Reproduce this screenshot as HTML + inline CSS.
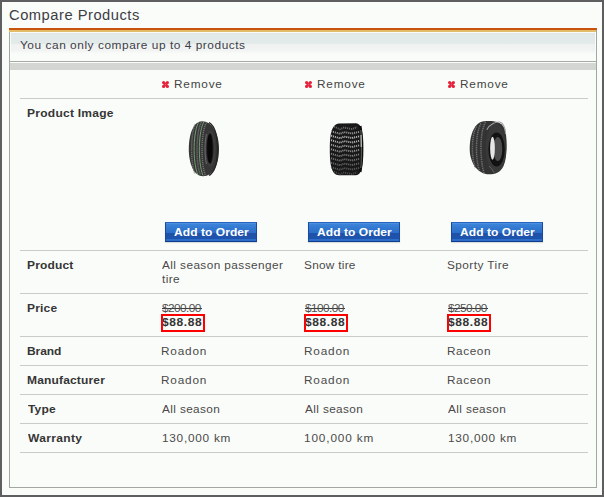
<!DOCTYPE html>
<html><head><meta charset="utf-8">
<style>
html,body{margin:0;padding:0}
body{width:604px;height:497px;overflow:hidden;background:#fafcf9;position:relative;font-family:"Liberation Sans",sans-serif;color:#404040}
.a{position:absolute;white-space:nowrap;transform-origin:0 0}
#frame{position:absolute;left:0;top:0;width:604px;height:497px;box-sizing:border-box;border:2px solid #5e5d60}
.ti{font-size:14px;line-height:18px;color:#3d3d45}
#box{position:absolute;left:9px;top:28px;width:588px;height:460px;box-sizing:border-box;border:1px solid #a3a7a3;border-top:0}
#ob1{position:absolute;left:9px;top:28px;width:588px;height:2px;background:#c9520c}
#ob2{position:absolute;left:9px;top:30px;width:587px;height:2px;background:#e4bb66}
#band{position:absolute;left:11px;top:33px;width:584px;height:21px;background:linear-gradient(#dfe5e3 0px,#e2e9e9 1.5px,#e3eaea 10.5px,#eff2f1 11.5px,#f1f4f2 17.5px,#f6f8f6 19px,#fafcf9 21px)}
.sb{font-size:10px;line-height:14px;color:#3d3d48}
#gl{position:absolute;left:10px;top:61px;width:586px;height:1px;background:#a7aba7}
#gb{position:absolute;left:10px;top:63px;width:586px;height:7px;background:#d4d6d4}
.hl{position:absolute;left:20px;width:568px;height:1px;background:#c9cbc9}
.lb{font-size:10px;font-weight:bold;line-height:14px;color:#353535}
.v{font-size:10px;line-height:14px;color:#4a4a4a}
.rm{font-size:10px;line-height:14px;color:#444}
.x{position:absolute;width:7px;height:7px}
.btn{position:absolute;width:92px;height:20px;box-sizing:border-box;border:1px solid #1a4a9e;border-top-color:#2a63c0;border-bottom-color:#0f3c8c;
background:linear-gradient(#4a90e0 0px,#4a90e0 1px,#3c84d8 1px,#3278d0 5px,#2c6ec9 10px,#1d51aa 10px,#1f54ad 16px,#2c6dc9 16px,#2c6dc9 18px);box-shadow:0 1px 1px rgba(0,0,0,0.12)}
.bt{font-size:10px;font-weight:bold;line-height:18px;color:#fff}
.old{font-size:10px;line-height:14px;color:#505050}
.sk{position:absolute;height:1px;background:#3a3a3a}
.rb{position:absolute;width:44px;height:18px;box-sizing:border-box;border:2px solid #f00}
.np{font-size:10px;font-weight:bold;line-height:14px;color:#353535}
</style></head><body>
<div id="frame"></div>
<div id="box"></div>
<div id="ob1"></div><div id="ob2"></div>
<div id="band"></div>
<div id="gl"></div><div id="gb"></div>
<div class="hl" style="top:98px"></div>
<div class="hl" style="top:250px"></div>
<div class="hl" style="top:293px"></div>
<div class="hl" style="top:336px"></div>
<div class="hl" style="top:365px"></div>
<div class="hl" style="top:394px"></div>
<div class="hl" style="top:423px"></div>
<div class="hl" style="top:452px"></div>
<svg class="x" style="left:162px;top:81px" width="7" height="7" viewBox="0 0 7 7"><g fill="#e4243c"><circle cx="1.6" cy="1.6" r="1.6"/><circle cx="5.4" cy="1.6" r="1.6"/><circle cx="1.6" cy="5.4" r="1.6"/><circle cx="5.4" cy="5.4" r="1.6"/></g><path d="M1.6 1.6L5.4 5.4M5.4 1.6L1.6 5.4" stroke="#e4243c" stroke-width="2.4"/><circle cx="3.5" cy="3.5" r="0.7" fill="#f05868"/></svg>
<svg class="x" style="left:305px;top:81px" width="7" height="7" viewBox="0 0 7 7"><g fill="#e4243c"><circle cx="1.6" cy="1.6" r="1.6"/><circle cx="5.4" cy="1.6" r="1.6"/><circle cx="1.6" cy="5.4" r="1.6"/><circle cx="5.4" cy="5.4" r="1.6"/></g><path d="M1.6 1.6L5.4 5.4M5.4 1.6L1.6 5.4" stroke="#e4243c" stroke-width="2.4"/><circle cx="3.5" cy="3.5" r="0.7" fill="#f05868"/></svg>
<svg class="x" style="left:448px;top:81px" width="7" height="7" viewBox="0 0 7 7"><g fill="#e4243c"><circle cx="1.6" cy="1.6" r="1.6"/><circle cx="5.4" cy="1.6" r="1.6"/><circle cx="1.6" cy="5.4" r="1.6"/><circle cx="5.4" cy="5.4" r="1.6"/></g><path d="M1.6 1.6L5.4 5.4M5.4 1.6L1.6 5.4" stroke="#e4243c" stroke-width="2.4"/><circle cx="3.5" cy="3.5" r="0.7" fill="#f05868"/></svg>
<svg style="position:absolute;left:186px;top:118px" width="38" height="60" viewBox="0 0 38 60">
  <path d="M16,3.2 C26,3.2 33,15 33,31 C33,47 27,58.2 17,58.2 C8,58.2 2.8,46 2.8,31 C2.8,15 8,3.2 16,3.2 Z" fill="#363636"/>
  <g fill="none" stroke="#727272" stroke-width="1.4" stroke-dasharray="1.2 0.8">
    <path d="M9.5,6 C4.6,14 4.2,46 9,55.5"/>
    <path d="M15.5,4 C10,13 9.5,46 14.5,57"/>
    <path d="M20.5,4.5 C15,13 14.5,46 19.5,57.5"/>
  </g>
  <g fill="none" stroke="#8cc489" stroke-width="0.8" opacity="0.9">
    <path d="M13,3.8 C7.2,12 6.2,44 12,57"/>
    <path d="M18,3.8 C12.5,12 11.5,44 17,57.5"/>
  </g>
  <path d="M23,4.5 C29,8 31.5,18 31.5,31 C31.5,44 29,54 23,57.5" fill="none" stroke="#262626" stroke-width="1.4"/>
  <ellipse cx="24.2" cy="30.8" rx="5.2" ry="18" fill="#3e3e3e"/>
  <path d="M20.5,16 C18.5,24 18.5,38 20.5,46" fill="none" stroke="#6a6a6a" stroke-width="1"/>
  <ellipse cx="24" cy="30.6" rx="3.6" ry="15.5" fill="#1e1e1e"/>
  <ellipse cx="23.8" cy="30.5" rx="2.6" ry="14.3" fill="#070707"/>
</svg>
<svg style="position:absolute;left:326px;top:118px" width="42" height="60" viewBox="0 0 42 60">
  <path d="M13,5.4 L30,5.2 C35.5,5.4 37.4,14 37.4,31 C37.4,48 35.5,57 30,57.3 L13,57.3 C5,57 3.8,46 3.8,31 C3.8,17 5,6.5 13,5.4 Z" fill="#181818"/>
  <g fill="none" stroke-width="1.9" stroke-dasharray="1.1 0.9">
    <path d="M8,8.7 L14,11.3 L18,9.6 L26,11 L31,9.2" stroke="#6a6a6a"/>
    <path d="M5.0,13.2 L14,15.8 L18,14.1 L26,15.5 L34,13.7" stroke="#9a9a9a"/>
    <path d="M5.0,17.7 L14,20.3 L18,18.6 L26,20 L34,18.2" stroke="#b8b8b8"/>
    <path d="M5.0,22.2 L14,24.8 L18,23.1 L26,24.5 L34,22.7" stroke="#b4b4b4"/>
    <path d="M5.0,26.7 L14,29.3 L18,27.6 L26,29 L34,27.2" stroke="#a4a4a4"/>
    <path d="M5.0,31.2 L14,33.8 L18,32.1 L26,33.5 L34,31.7" stroke="#929292"/>
    <path d="M5.0,35.7 L14,38.3 L18,36.6 L26,38 L34,36.2" stroke="#808080"/>
    <path d="M5.0,40.2 L14,42.8 L18,41.1 L26,42.5 L34,40.7" stroke="#727272"/>
    <path d="M5.0,44.7 L14,47.3 L18,45.6 L26,47 L34,45.2" stroke="#666666"/>
    <path d="M5.0,49.2 L14,51.8 L18,50.1 L26,51.5 L34,49.7" stroke="#5c5c5c"/>
    <path d="M8,53.7 L14,56.3 L18,54.6 L26,56 L31,54.2" stroke="#4a4a4a"/>
  </g>
  <path d="M34.4,8 C36.2,18 36.2,44 34.4,54" fill="none" stroke="#0c0c0c" stroke-width="2.2"/>
  <path d="M34.8,12 C35.6,20 35.6,42 34.8,50" fill="none" stroke="#7a7a7a" stroke-width="0.8"/>
  <path d="M35,17 L35.2,29" fill="none" stroke="#e0e0e0" stroke-width="1"/>
</svg>
<svg style="position:absolute;left:465px;top:116px" width="46" height="60" viewBox="0 0 46 60">
  <path d="M19,5.3 C28,4.8 38,4.5 40.5,16 C42.5,26 42,42 38.5,50 C35.5,56.5 30,58.3 24,58.3 C13,58.3 4.7,47 4.7,33 C4.7,18 10,5.8 19,5.3 Z" fill="#333"/>
  <g fill="none" stroke="#6e6e6e" stroke-width="1.5" stroke-dasharray="1.4 0.8">
    <path d="M11.5,10.5 C6.5,18 6,42 10.5,52"/>
    <path d="M16,7.5 C10.5,16 10,42 14.5,55"/>
    <path d="M20.5,6 C15,15 14.5,42 19,57"/>
  </g>
  <ellipse cx="31" cy="32" rx="10.2" ry="24.5" fill="#393939"/>
  <path d="M21.8,13.8 C25,7.5 31,5.8 34.7,6 C38.5,7 40.3,12 40.6,18" fill="none" stroke="#a0a0a0" stroke-width="1.1"/>
  <ellipse cx="31.6" cy="33.5" rx="8.2" ry="17.1" fill="#121212"/>
  <ellipse cx="32.8" cy="33" rx="4.5" ry="12" fill="#4c4c4c"/>
  <ellipse cx="27.5" cy="32.2" rx="2.35" ry="11.5" fill="#e6e6e6"/>
  <path d="M24,50 C27,53 29,56 29.5,58" fill="none" stroke="#666" stroke-width="0.9"/>
</svg>
<div class="btn" style="left:165px;top:222px"></div>
<div class="btn" style="left:308px;top:222px"></div>
<div class="btn" style="left:451px;top:222px"></div>
<div class="sk" style="left:162px;top:308px;width:40px"></div>
<div class="rb" style="left:161px;top:314px"></div>
<div class="sk" style="left:305px;top:308px;width:40px"></div>
<div class="rb" style="left:304px;top:314px"></div>
<div class="sk" style="left:448px;top:308px;width:40px"></div>
<div class="rb" style="left:447px;top:314px"></div>
<div id="title" class="a ti" style="left:9.00px;top:6.00px;letter-spacing:0.492px;transform:scaleX(1.05)">Compare Products</div>
<div id="sub" class="a sb" style="left:20.00px;top:38.00px;letter-spacing:0.500px;transform:scaleX(1.08);font-size:11px">You can only compare up to 4 products</div>
<div id="rm0" class="a rm" style="left:174.00px;top:78.00px;letter-spacing:0.673px;transform:scaleX(1.18)">Remove</div>
<div id="rm1" class="a rm" style="left:317.00px;top:78.00px;letter-spacing:0.673px;transform:scaleX(1.18)">Remove</div>
<div id="rm2" class="a rm" style="left:460.00px;top:78.00px;letter-spacing:0.673px;transform:scaleX(1.18)">Remove</div>
<div id="lpi" class="a lb" style="left:27.00px;top:107.00px;letter-spacing:0.217px;transform:scaleX(1.2)">Product Image</div>
<div id="lpr" class="a lb" style="left:27.00px;top:259.00px;letter-spacing:0.141px;transform:scaleX(1.2)">Product</div>
<div id="lpc" class="a lb" style="left:27.00px;top:302.00px;letter-spacing:0.148px;transform:scaleX(1.2)">Price</div>
<div id="lbr" class="a lb" style="left:27.00px;top:345.00px;letter-spacing:-0.080px;transform:scaleX(1.2)">Brand</div>
<div id="lma" class="a lb" style="left:27.00px;top:374.00px;letter-spacing:0.139px;transform:scaleX(1.2)">Manufacturer</div>
<div id="lty" class="a lb" style="left:28.00px;top:403.00px;letter-spacing:0.141px;transform:scaleX(1.2)">Type</div>
<div id="lwa" class="a lb" style="left:28.00px;top:432.00px;letter-spacing:0.275px;transform:scaleX(1.2)">Warranty</div>
<div id="p1a" class="a v" style="left:162.00px;top:259.00px;letter-spacing:0.356px;transform:scaleX(1.18)">All season passenger</div>
<div id="p1b" class="a v" style="left:162.00px;top:273.00px;letter-spacing:0.356px;transform:scaleX(1.18)">tire</div>
<div id="p2" class="a v" style="left:304.00px;top:259.00px;letter-spacing:0.235px;transform:scaleX(1.18)">Snow tire</div>
<div id="p3" class="a v" style="left:447.00px;top:259.00px;letter-spacing:0.388px;transform:scaleX(1.18)">Sporty Tire</div>
<div id="old0" class="a old" style="left:162.00px;top:302.00px;letter-spacing:-0.484px;transform:scaleX(1.18)">$200.00</div>
<div id="np0" class="a np" style="left:162.00px;top:316.00px;letter-spacing:0.500px;transform:scaleX(1.2)">$88.88</div>
<div id="old1" class="a old" style="left:305.00px;top:302.00px;letter-spacing:-0.484px;transform:scaleX(1.18)">$100.00</div>
<div id="np1" class="a np" style="left:305.00px;top:316.00px;letter-spacing:0.500px;transform:scaleX(1.2)">$88.88</div>
<div id="old2" class="a old" style="left:448.00px;top:302.00px;letter-spacing:-0.484px;transform:scaleX(1.18)">$250.00</div>
<div id="np2" class="a np" style="left:448.00px;top:316.00px;letter-spacing:0.500px;transform:scaleX(1.2)">$88.88</div>
<div id="b1" class="a v" style="left:161.00px;top:345.00px;letter-spacing:0.686px;transform:scaleX(1.18)">Roadon</div>
<div id="b2" class="a v" style="left:304.00px;top:345.00px;letter-spacing:0.686px;transform:scaleX(1.18)">Roadon</div>
<div id="b3" class="a v" style="left:447.00px;top:345.00px;letter-spacing:0.492px;transform:scaleX(1.18)">Raceon</div>
<div id="m1" class="a v" style="left:161.00px;top:374.00px;letter-spacing:0.686px;transform:scaleX(1.18)">Roadon</div>
<div id="m2" class="a v" style="left:304.00px;top:374.00px;letter-spacing:0.686px;transform:scaleX(1.18)">Roadon</div>
<div id="m3" class="a v" style="left:447.00px;top:374.00px;letter-spacing:0.492px;transform:scaleX(1.18)">Raceon</div>
<div id="t0" class="a v" style="left:162.00px;top:403.00px;letter-spacing:0.320px;transform:scaleX(1.18)">All season</div>
<div id="t1" class="a v" style="left:305.00px;top:403.00px;letter-spacing:0.320px;transform:scaleX(1.18)">All season</div>
<div id="t2" class="a v" style="left:448.00px;top:403.00px;letter-spacing:0.320px;transform:scaleX(1.18)">All season</div>
<div id="w1" class="a v" style="left:162.00px;top:432.00px;letter-spacing:0.630px;transform:scaleX(1.18)">130,000 km</div>
<div id="w2" class="a v" style="left:304.00px;top:432.00px;letter-spacing:0.731px;transform:scaleX(1.18)">100,000 km</div>
<div id="w3" class="a v" style="left:448.00px;top:432.00px;letter-spacing:0.630px;transform:scaleX(1.18)">130,000 km</div>
<div id="bt0" class="a bt" style="left:174.00px;top:224.00px;letter-spacing:0.056px;transform:scaleX(1.2)">Add to Order</div>
<div id="bt1" class="a bt" style="left:317.00px;top:224.00px;letter-spacing:0.056px;transform:scaleX(1.2)">Add to Order</div>
<div id="bt2" class="a bt" style="left:460.00px;top:224.00px;letter-spacing:0.056px;transform:scaleX(1.2)">Add to Order</div>
</body></html>
